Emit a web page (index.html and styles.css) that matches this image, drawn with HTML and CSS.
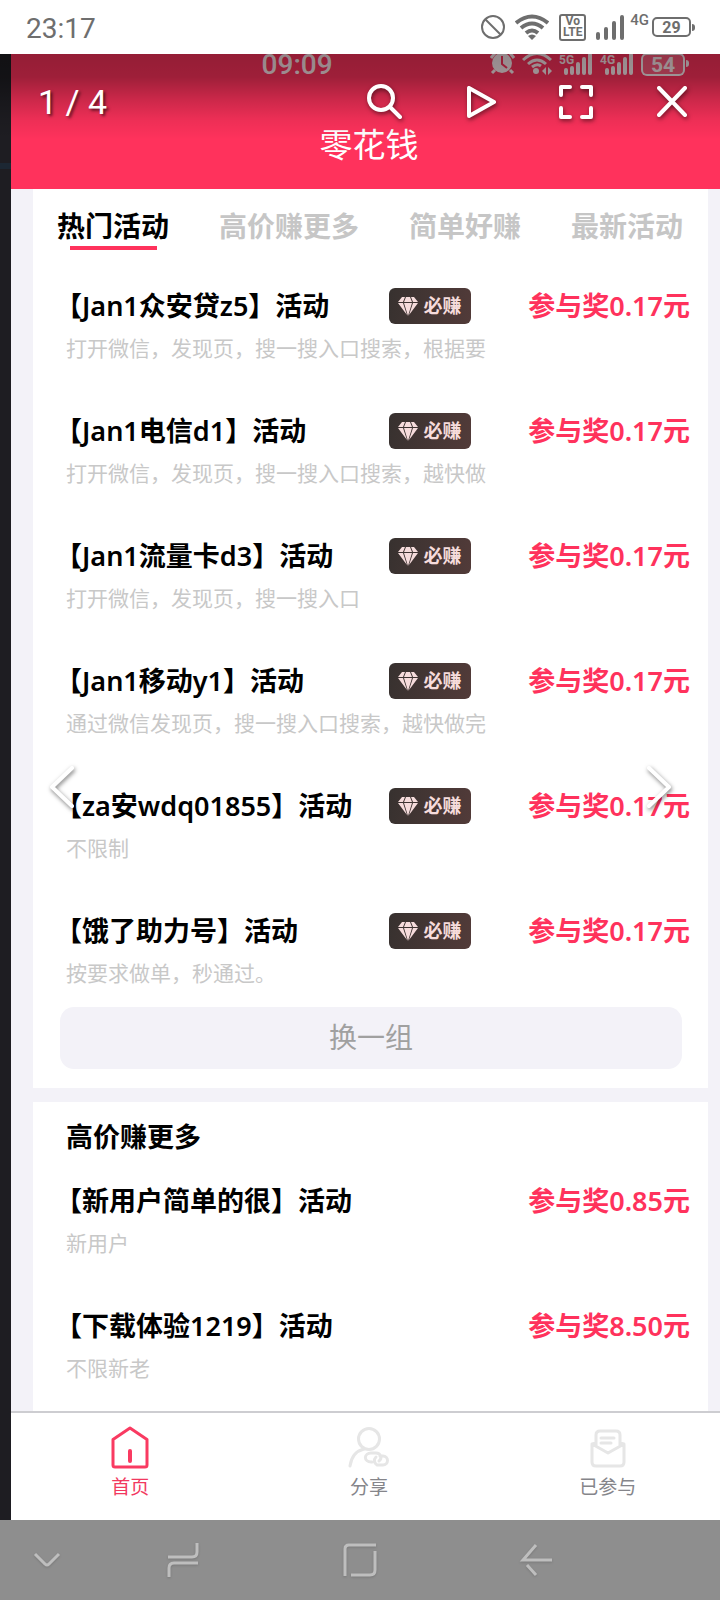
FILE: index.html
```html
<!DOCTYPE html>
<html lang="zh-CN">
<head>
<meta charset="utf-8">
<meta name="viewport" content="width=device-width, initial-scale=1">
<title>零花钱</title>
<link rel="stylesheet" href="styles.css">
</head>
<body>
<svg class="defs" aria-hidden="true">
  <symbol id="gem" viewBox="0 0 20 19"><path d="M4 0h3L5 5H0zM8 0h4l2 5H6zM13 0h3l4 5h-5zM0 6h5l4 12zM6 6h8l-4 13zM15 6h5l-9 12z"/></symbol>
  <symbol id="bars" viewBox="0 0 29 22"><path d="M2 16v3M8 14v5M14 10v9M20 5v14M26 1v18" fill="none" stroke="currentColor" stroke-width="4" stroke-linecap="round"/></symbol>
</svg>

<div class="phone-status">
  <span class="phone-time">23:17</span>
  <div class="phone-icons">
    <svg class="ico-ban" viewBox="0 0 24 24"><circle cx="12" cy="12" r="11"/><path d="M4 4l16 16"/></svg>
    <svg class="ico-wifi" viewBox="0 0 34 26"><path class="line" d="M1 9Q17-4 33 9M6 14Q17 5 28 14M11 19q6-5 12 0"/><path d="M13 22q4-3 8 0l-4 4z"/></svg>
    <span class="volte"><span>Vo</span><span>LTE</span></span>
    <svg class="ico-signal" viewBox="0 0 29 25"><path d="M2 19v4M10 14v9M18 8v15M26 2v21"/></svg>
    <span class="net">4G</span>
    <span class="battery">29</span>
  </div>
</div>

<main class="stage">
  <div class="app">
    <header class="app-header">
      <div class="app-status">
        <span class="app-time">09:09</span>
        <div class="app-icons">
          <svg class="ico-alarm" viewBox="0 0 25 22"><circle cx="12" cy="9" r="10"/><path class="line" d="M1 4l4-5M24 4l-4-5M5 16l-3 3M20 16l3 3"/><path class="hands" d="M12 2v8l5 4"/></svg>
          <svg class="ico-wifi2" viewBox="0 0 30 22"><path class="line" d="M1 6Q15-7 29 6M6 10q9-8 18 0M10 13q5-4 9-1"/><circle cx="14" cy="17" r="3"/><path d="M24 13v8l-4-4zM26 13v8l4-4z"/></svg>
          <span class="cell"><svg><use href="#bars"/></svg><span class="cell-label">5G</span></span>
          <span class="cell"><svg><use href="#bars"/></svg><span class="cell-label">4G</span></span>
          <span class="battery2">54</span>
        </div>
      </div>
      <h1 class="app-title">零花钱</h1>
    </header>

    <div class="content">
      <section class="card">
        <div class="tabs" role="tablist">
          <button class="tab active" role="tab" aria-selected="true">热门活动</button>
          <button class="tab" role="tab">高价赚更多</button>
          <button class="tab" role="tab">简单好赚</button>
          <button class="tab" role="tab">最新活动</button>
        </div>
        <ul class="list">
          <li class="item"><div class="row"><h2 class="name">【Jan1众安贷z5】活动</h2><span class="badge"><svg><use href="#gem"/></svg>必赚</span><span class="reward">参与奖0.17元</span></div><p class="desc">打开微信，发现页，搜一搜入口搜索，根据要</p></li>
          <li class="item"><div class="row"><h2 class="name">【Jan1电信d1】活动</h2><span class="badge"><svg><use href="#gem"/></svg>必赚</span><span class="reward">参与奖0.17元</span></div><p class="desc">打开微信，发现页，搜一搜入口搜索，越快做</p></li>
          <li class="item"><div class="row"><h2 class="name">【Jan1流量卡d3】活动</h2><span class="badge"><svg><use href="#gem"/></svg>必赚</span><span class="reward">参与奖0.17元</span></div><p class="desc">打开微信，发现页，搜一搜入口</p></li>
          <li class="item"><div class="row"><h2 class="name">【Jan1移动y1】活动</h2><span class="badge"><svg><use href="#gem"/></svg>必赚</span><span class="reward">参与奖0.17元</span></div><p class="desc">通过微信发现页，搜一搜入口搜索，越快做完</p></li>
          <li class="item"><div class="row"><h2 class="name">【za安wdq01855】活动</h2><span class="badge"><svg><use href="#gem"/></svg>必赚</span><span class="reward">参与奖0.17元</span></div><p class="desc">不限制</p></li>
          <li class="item"><div class="row"><h2 class="name">【饿了助力号】活动</h2><span class="badge"><svg><use href="#gem"/></svg>必赚</span><span class="reward">参与奖0.17元</span></div><p class="desc">按要求做单，秒通过。</p></li>
        </ul>
        <button class="refresh">换一组</button>
      </section>

      <section class="card more">
        <h2 class="section-title">高价赚更多</h2>
        <ul class="list">
          <li class="item"><div class="row"><h3 class="name">【新用户简单的很】活动</h3><span class="reward">参与奖0.85元</span></div><p class="desc">新用户</p></li>
          <li class="item"><div class="row"><h3 class="name">【下载体验1219】活动</h3><span class="reward">参与奖8.50元</span></div><p class="desc">不限新老</p></li>
        </ul>
      </section>
    </div>

    <nav class="tabbar">
      <a class="tabbar-item current" href="#home">
        <svg viewBox="0 0 42 44"><path d="M21 3L38 14.500V40q0 2-2 2H6q-2 0-2-2V14.500z" stroke-width="3"/><path d="M21 26v10" stroke-width="4"/></svg>
        首页</a>
      <a class="tabbar-item" href="#share">
        <svg viewBox="0 0 42 44"><circle cx="21" cy="14" r="10.500"/><path d="M2 41q2-14 14-17M24 37h-1a5 4 0 0 1 0-9h5a5 4.500 0 0 1 3 8M32 31h3a4.500 4.500 0 0 1 0 9h-6a5 5 0 0 1-1-8"/></svg>
        分享</a>
      <a class="tabbar-item" href="#joined">
        <svg viewBox="0 0 42 44"><path d="M9 20V10q0-4 4-4h16q4 0 4 4v10M9 18l-4 1v18q0 4 4 4h24q4 0 4-4V19l-4-1M5 19l16 9 16-9M14 13h13M14 18h10"/></svg>
        已参与</a>
    </nav>
  </div>

  <div class="viewer-bar">
    <span class="counter">1 / 4</span>
    <button class="tool" aria-label="搜索"><svg viewBox="0 0 36 36"><circle cx="15" cy="14" r="12"/><path d="M24 23l10 10"/></svg></button>
    <button class="tool" aria-label="播放"><svg viewBox="0 0 36 36"><path d="M7 4v28l25-14z"/></svg></button>
    <button class="tool" aria-label="全屏"><svg viewBox="0 0 36 36"><path d="M3 11V3h9M24 3h9v8M33 24v9h-9M12 33H3v-9"/></svg></button>
    <button class="tool" aria-label="关闭"><svg viewBox="0 0 36 36"><path d="M5 4l26 27M31 4L5 31"/></svg></button>
  </div>
  <button class="arrow prev" aria-label="上一张"><svg viewBox="0 0 28 44"><path d="M24 3L4 22l20 19"/></svg></button>
  <button class="arrow next" aria-label="下一张"><svg viewBox="0 0 28 44"><path d="M4 3l20 19L4 41"/></svg></button>
</main>

<nav class="sysnav">
  <button aria-label="收起"><svg viewBox="0 0 36 36"><path d="M5 12l10 10q2 2 4 0l10-10"/></svg></button>
  <button aria-label="最近任务"><svg viewBox="0 0 36 36"><path d="M3 15h24q5 0 5-5V1M33 21H9q-5 0-5 5v9"/></svg></button>
  <button aria-label="主屏幕"><svg viewBox="0 0 36 36"><path d="M34 3H7q-4 0-4 4v27M9 33h19q5 0 5-5V9"/></svg></button>
  <button aria-label="返回"><svg viewBox="0 0 36 36"><path d="M33 18H4L17 3M8 23l9 10"/></svg></button>
</nav>
</body>
</html>
```
FILE: styles.css
```css
* { box-sizing: border-box; }

body {
  margin: 0;
  min-height: 100vh;
  display: flex;
  flex-direction: column;
  background: #fff;
  font-family: "Noto Sans", "Noto Sans CJK SC", sans-serif;
  overflow-x: hidden;
}

h1, h2, h3, p, ul { margin: 0; padding: 0; font-weight: inherit; }
ul { list-style: none; }
button { border: 0; padding: 0; background: none; color: inherit; font: inherit; }
svg { display: block; flex: none; }
.defs { position: absolute; width: 0; height: 0; }

/* Phone status bar */
.phone-status {
  display: flex;
  align-items: center;
  justify-content: space-between;
  height: 54px;
  padding: 0 26px;
  color: #6e6e6e;
  font-family: Roboto, sans-serif;
}
.phone-time { font-size: 28px; line-height: 32px; padding-top: 3px; }
.phone-icons { display: flex; align-items: center; gap: 10px; }
.phone-icons svg { fill: none; stroke: currentColor; stroke-width: 2; }
.phone-icons .ico-ban { width: 24px; height: 24px; }
.phone-icons .ico-wifi { width: 34px; height: 26px; stroke: none; fill: currentColor; }
.phone-icons .ico-wifi .line { stroke: currentColor; stroke-width: 4; fill: none; }
.phone-icons .ico-signal { width: 29px; height: 25px; stroke-width: 4; stroke-linecap: round; }
.volte {
  display: flex;
  flex-direction: column;
  align-items: center;
  width: 27px;
  height: 27px;
  border: 2px solid;
  border-radius: 3px;
  font-size: 12px;
  font-weight: 700;
  line-height: 11px;
}
.net { align-self: flex-start; margin: 0 -7px 0 -5px; font-size: 15px; font-weight: 500; line-height: 12px; }
.battery {
  position: relative;
  width: 39px;
  height: 20px;
  margin-right: 3px;
  border: 2px solid;
  border-radius: 5px;
  font-size: 16px;
  font-weight: 700;
  line-height: 17px;
  text-align: center;
}
.battery::after, .battery2::after {
  content: "";
  position: absolute;
  right: -6px;
  top: 5px;
  width: 3px;
  height: 7px;
  border-radius: 0 3px 3px 0;
  background: currentColor;
}

/* Viewer stage */
.stage {
  position: relative;
  flex: 1;
  display: flex;
  padding-left: 11px;
  overflow: hidden;
  background: linear-gradient(#1e1d22 0, #1e1d22 109px, #1c2733 109px, #1c2733 115px, #1e1d22 115px);
}
.app {
  flex: 1;
  display: flex;
  flex-direction: column;
  margin-right: -7px;
  background: #f3f2f8;
}

.app-header {
  padding-bottom: 22px;
  background: #ff325c;
  color: #fff;
}
.app-status {
  display: flex;
  align-items: flex-start;
  justify-content: space-between;
  height: 23px;
  padding: 0 42px 0 35%;
  color: rgba(255, 255, 255, .9);
  font-family: Roboto, sans-serif;
}
.app-time { font-size: 28px; font-weight: 500; line-height: 22px; }
.app-icons { display: flex; gap: 7px; }
.app-icons svg { fill: currentColor; }
.app-icons .line { fill: none; stroke: currentColor; stroke-width: 3; }
.app-icons .ico-alarm { width: 25px; height: 22px; }
.app-icons .hands { fill: none; stroke: #ff325c; stroke-width: 2; }
.ico-wifi2 { width: 30px; height: 22px; }
.cell { position: relative; width: 34px; padding-left: 5px; }
.cell svg { width: 29px; height: 22px; }
.cell-label { position: absolute; left: 0; top: 0; font-size: 12px; font-weight: 700; line-height: 12px; }
.battery2 {
  position: relative;
  width: 44px;
  height: 23px;
  margin-top: -1px;
  border: 2px solid;
  border-radius: 6px;
  background: rgba(255, 255, 255, .2);
  font-size: 21px;
  font-weight: 700;
  line-height: 20px;
  text-align: center;
}
.app-title {
  margin-top: 42px;
  font-family: "Noto Sans CJK SC", sans-serif;
  font-size: 33px;
  line-height: 48px;
  text-align: center;
}

.content {
  flex: 1;
  display: flex;
  flex-direction: column;
  gap: 14px;
  padding: 0 19px 0 22px;
}
.card { padding: 17px 18px 19px 22px; background: #fff; }
.tabs { display: flex; justify-content: space-between; padding: 0 7px 0 2px; }
.tab {
  display: flex;
  flex-direction: column;
  align-items: center;
  color: #c6c6c6;
  font-size: 28px;
  font-weight: 700;
  line-height: 40px;
}
.tab.active { color: #000; }
.tab.active::after {
  content: "";
  width: 87px;
  height: 4px;
  background: #ff325c;
}
.list { display: flex; flex-direction: column; gap: 51px; margin-top: 38px; }
.row { display: flex; align-items: center; height: 36px; }
.name {
  flex: 0 0 334px;
  color: #000;
  font-size: 27px;
  font-weight: 600;
  line-height: 36px;
  white-space: nowrap;
}
.badge {
  display: flex;
  align-items: center;
  justify-content: center;
  gap: 5px;
  width: 82px;
  height: 36px;
  border-radius: 6px;
  background: linear-gradient(100deg, #37312f, #523b39);
  color: #f6dcdc;
  font-size: 19px;
  font-weight: 700;
  line-height: 36px;
}
.badge svg { width: 20px; height: 19px; fill: currentColor; }
.reward {
  margin-left: auto;
  color: #ff325c;
  font-size: 27px;
  font-weight: 600;
  line-height: 36px;
  white-space: nowrap;
}
.desc {
  margin-top: 8px;
  padding-left: 11px;
  color: #c8c8c8;
  font-family: "Noto Sans CJK SC", sans-serif;
  font-size: 21px;
  line-height: 30px;
}
.refresh {
  display: block;
  width: calc(100% - 13px);
  height: 62px;
  margin: 20px 0 0 5px;
  padding-bottom: 4px;
  border-radius: 14px;
  background: #f3f2f8;
  color: #a0a0a0;
  font-size: 28px;
}
.more { flex: 1; padding-bottom: 27px; }
.more .list { margin-top: 28px; }
.section-title { padding-left: 11px; font-size: 27px; font-weight: 600; line-height: 36px; }

.tabbar {
  display: grid;
  grid-template-columns: repeat(3, 1fr);
  padding: 12px 0 19px;
  border-top: 2px solid #cdcdd1;
  background: #fff;
}
.tabbar-item {
  display: flex;
  flex-direction: column;
  align-items: center;
  gap: 4px;
  color: #85858a;
  font-size: 19px;
  line-height: 28px;
  text-decoration: none;
}
.tabbar-item svg {
  width: 42px;
  height: 44px;
  fill: none;
  stroke: #e6e6e6;
  stroke-width: 3;
  stroke-linecap: round;
  stroke-linejoin: round;
}
.tabbar-item.current { color: #f2395f; }
.tabbar-item.current svg { stroke: #f93a61; }

/* Viewer controls over the picture */
.viewer-bar {
  position: absolute;
  inset: 0 0 auto;
  display: flex;
  align-items: center;
  height: 96px;
  background: linear-gradient(rgba(0, 0, 0, .42) 0, rgba(0, 0, 0, .38) 23px, rgba(0, 0, 0, .2) 46px, rgba(0, 0, 0, .07) 66px, rgba(0, 0, 0, 0) 86px);
  color: #fff;
}
.counter {
  flex: 1;
  padding-left: 38px;
  font-family: Roboto, sans-serif;
  font-size: 34px;
  text-shadow: 2px 2px 3px rgba(0, 0, 0, .6);
}
.tool { display: flex; justify-content: center; width: 96px; }
.tool svg, .arrow svg {
  width: 36px;
  height: 36px;
  fill: none;
  stroke: #fff;
  stroke-width: 4;
  stroke-linecap: round;
  stroke-linejoin: round;
  filter: drop-shadow(1px 2px 2px rgba(0, 0, 0, .5));
}
.arrow { position: absolute; top: 50%; margin-top: -22px; }
.arrow svg { width: 28px; height: 44px; }
.prev { left: 48px; }
.next { right: 47px; }

/* System navigation */
.sysnav {
  display: grid;
  grid-template-columns: 95px 1fr 1fr 1fr 95px;
  height: 80px;
  background: #8e8e8e;
}
.sysnav button { display: flex; align-items: center; justify-content: center; }
.sysnav svg {
  width: 36px;
  height: 36px;
  fill: none;
  stroke: #bebebe;
  stroke-width: 3;
  filter: drop-shadow(0 1px 1px rgba(0, 0, 0, .15));
}
```
